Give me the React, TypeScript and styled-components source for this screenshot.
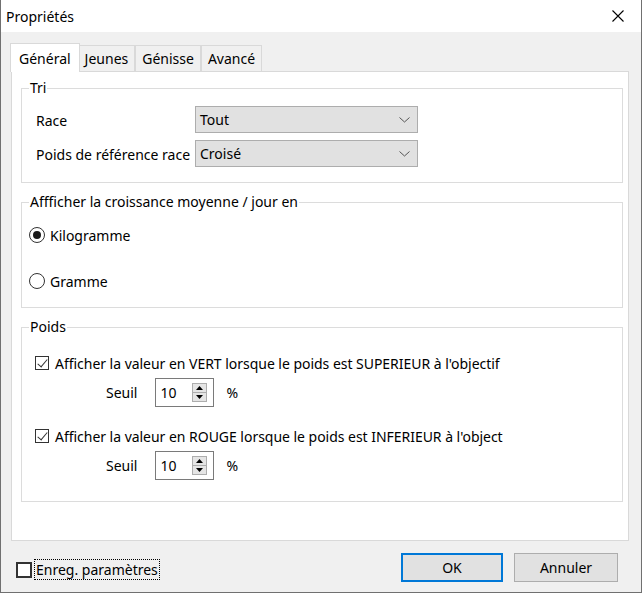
import styled, { createGlobalStyle } from "styled-components";

const GlobalStyle = createGlobalStyle`
    html, body {
        margin: 0;
        padding: 0;
        background: #ffffff;
    }
    body {
        font-family: "Segoe UI", "Noto Sans", sans-serif;
        font-size: 14px;
        color: #000;
    }
    * {
        box-sizing: border-box;
    }
`;

const tabs = ["Général", "Jeunes", "Génisse", "Avancé"];

export default function App() {
    return <Window>
        <GlobalStyle/>
        <TitleBar>
            <TitleText>Propriétés</TitleText>
            <CloseButton>
                <svg width="12" height="12" viewBox="0 0 12 12">
                    <path d="M0.5 0.5 L11.5 11.5 M11.5 0.5 L0.5 11.5" stroke="#000" strokeWidth="1.1" fill="none"/>
                </svg>
            </CloseButton>
        </TitleBar>

        <Body>
            <TabStrip>
                {tabs.map((t, i) => <Tab key={t} $active={i === 0}>{t}</Tab>)}
            </TabStrip>
            <Panel>
                <Group $height={103}>
                    <Legend>Tri</Legend>
                    <TriGrid>
                        <FieldLabel>Race</FieldLabel>
                        <Combo value="Tout"/>
                        <FieldLabel>Poids de référence race</FieldLabel>
                        <Combo value="Croisé"/>
                    </TriGrid>
                </Group>

                <Group $height={114} $gap={11}>
                    <Legend>Affficher la croissance moyenne / jour en</Legend>
                    <RadioList>
                        <RadioRow><Radio $checked/>Kilogramme</RadioRow>
                        <RadioRow><Radio/>Gramme</RadioRow>
                    </RadioList>
                </Group>

                <Group $height={183} $gap={11}>
                    <Legend>Poids</Legend>
                    <PoidsList>
                        <CheckRow>
                            <CheckBox $checked/>
                            <CheckText>Afficher la valeur en VERT lorsque le poids est SUPERIEUR à l'objectif</CheckText>
                        </CheckRow>
                        <SeuilRow>
                            <span>Seuil</span>
                            <Spin value="10"/>
                            <span>%</span>
                        </SeuilRow>
                        <CheckRow $top={19}>
                            <CheckBox $checked/>
                            <CheckText>Afficher la valeur en ROUGE lorsque le poids est INFERIEUR à l'objectif</CheckText>
                        </CheckRow>
                        <SeuilRow>
                            <span>Seuil</span>
                            <Spin value="10"/>
                            <span>%</span>
                        </SeuilRow>
                    </PoidsList>
                </Group>
            </Panel>
        </Body>

        <Footer>
            <SaveCheck>
                <FooterBox/>
                <FocusLabel>Enreg. paramètres</FocusLabel>
            </SaveCheck>
            <Buttons>
                <DialogButton $default>OK</DialogButton>
                <DialogButton>Annuler</DialogButton>
            </Buttons>
        </Footer>
    </Window>
}

const Combo = ({value}: { value: string }) => (
    <ComboBox>
        <span>{value}</span>
        <svg width="11" height="6" viewBox="0 0 11 6">
            <path d="M0.5 0.5 L5.5 5 L10.5 0.5" stroke="#555" strokeWidth="1" fill="none"/>
        </svg>
    </ComboBox>
);

const Spin = ({value}: { value: string }) => (
    <SpinBox>
        <span>{value}</span>
        <SpinButtons>
            <SpinButton>
                <svg width="7" height="4" viewBox="0 0 7 4"><path d="M0 4 L3.5 0 L7 4 Z" fill="#000"/></svg>
            </SpinButton>
            <SpinButton>
                <svg width="7" height="4" viewBox="0 0 7 4"><path d="M0 0 L3.5 4 L7 0 Z" fill="#000"/></svg>
            </SpinButton>
        </SpinButtons>
    </SpinBox>
);

const Window = styled.div`
    width: 642px;
    height: 593px;
    display: flex;
    flex-direction: column;
    background: #f0f0f0;
    border: 1px solid #707070;
    border-top: none;
`;

const TitleBar = styled.div`
    height: 32px;
    flex-shrink: 0;
    display: flex;
    align-items: center;
    background: #ffffff;
    padding-left: 5px;
`;

const TitleText = styled.span`
    font-size: 14px;
`;

const CloseButton = styled.div`
    margin-left: auto;
    width: 46px;
    height: 32px;
    display: flex;
    align-items: center;
    justify-content: center;
`;

const Body = styled.div`
    display: flex;
    flex-direction: column;
    padding: 11px 0 0 10px;
`;

const TabStrip = styled.div`
    height: 28px;
    display: flex;
    align-items: flex-end;
    padding-left: 1px;
`;

const Tab = styled.div<{ $active?: boolean }>`
    height: ${p => p.$active ? 29 : 26}px;
    margin: ${p => p.$active ? "0 -2px -1px -2px" : "0"};
    padding: ${p => p.$active ? "0 8px" : "0 6px"};
    position: relative;
    z-index: ${p => p.$active ? 2 : 1};
    display: flex;
    align-items: center;
    background: ${p => p.$active ? "#ffffff" : "#f0f0f0"};
    border: 1px solid #d9d9d9;
    border-bottom: none;
    white-space: nowrap;
`;

const Panel = styled.div`
    width: 618px;
    height: 470px;
    background: #ffffff;
    border: 1px solid #d9d9d9;
    padding: 8px 5px 0 9px;
    display: flex;
    flex-direction: column;
`;

const Group = styled.fieldset<{ $height: number; $gap?: number }>`
    height: ${p => p.$height}px;
    margin: ${p => p.$gap ?? 0}px 0 0 0;
    padding: 0;
    border: 1px solid #dcdcdc;
    min-width: 0;
`;

const Legend = styled.legend`
    margin-left: 7px;
    padding: 0 1px;
    line-height: 16px;
    height: 16px;
`;

const TriGrid = styled.div`
    display: grid;
    grid-template-columns: 159px 223px;
    grid-auto-rows: 27px;
    row-gap: 7px;
    align-items: center;
    padding: 10px 0 0 14px;
`;

const FieldLabel = styled.span`
    white-space: nowrap;
    padding-top: 2px;
`;

const ComboBox = styled.div`
    height: 27px;
    display: flex;
    align-items: center;
    justify-content: space-between;
    padding: 0 7px 0 4px;
    background: #e1e1e1;
    border: 1px solid #adadad;
`;

const RadioList = styled.div`
    display: flex;
    flex-direction: column;
    gap: 26px;
    padding: 15px 0 0 7px;
`;

const RadioRow = styled.div`
    height: 20px;
    display: flex;
    align-items: center;
    gap: 5px;
`;

const Radio = styled.span<{ $checked?: boolean }>`
    width: 16px;
    height: 16px;
    border-radius: 50%;
    border: 1px solid #333333;
    background: #ffffff;
    display: flex;
    align-items: center;
    justify-content: center;

    &::after {
        content: "";
        width: 8px;
        height: 8px;
        border-radius: 50%;
        background: #1a1a1a;
        display: ${p => p.$checked ? "block" : "none"};
    }
`;

const PoidsList = styled.div`
    display: flex;
    flex-direction: column;
    padding: 18px 0 0 13px;
`;

const CheckRow = styled.div<{ $top?: number }>`
    height: 20px;
    margin-top: ${p => p.$top ?? 0}px;
    display: flex;
    align-items: center;
    width: 468px;
    overflow: hidden;
`;

const CheckBox = styled.span<{ $checked?: boolean }>`
    flex-shrink: 0;
    width: 14px;
    height: 14px;
    margin-right: 6px;
    border: 1px solid #333333;
    background: #ffffff;
    position: relative;

    &::after {
        content: "";
        display: ${p => p.$checked ? "block" : "none"};
        position: absolute;
        left: 4px;
        top: 0px;
        width: 4px;
        height: 9px;
        border: solid #333333;
        border-width: 0 1px 1px 0;
        transform: rotate(40deg);
    }
`;

const CheckText = styled.span`
    white-space: nowrap;
    letter-spacing: -0.03px;
`;

const SeuilRow = styled.div`
    display: flex;
    align-items: center;
    margin-top: 5px;
    padding-left: 71px;

    & > span:first-child {
        margin-right: 18px;
    }
    & > span:last-child {
        margin-left: 12px;
    }
`;

const SpinBox = styled.div`
    width: 59px;
    height: 29px;
    border: 1px solid #7a7a7a;
    background: #ffffff;
    display: flex;
    align-items: center;
    justify-content: space-between;
    padding: 0 6px 0 4px;
`;

const SpinButtons = styled.div`
    display: flex;
    flex-direction: column;
`;

const SpinButton = styled.div`
    width: 15px;
    height: 10px;
    background: #e5e5e5;
    border: 1px solid #adadad;
    display: flex;
    align-items: center;
    justify-content: center;

    & + & {
        margin-top: -1px;
    }
`;

const Footer = styled.div`
    display: flex;
    align-items: flex-start;
    justify-content: space-between;
    padding: 12px 23px 0 15px;
`;

const SaveCheck = styled.div`
    display: flex;
    align-items: center;
    gap: 3px;
    margin-top: 7px;
`;

const FooterBox = styled.span`
    width: 16px;
    height: 16px;
    border: 2px solid #333333;
    background: #ffffff;
`;

const FocusLabel = styled.span`
    padding: 0 1px;
    outline: 1px dotted #000;
    line-height: 19px;
`;

const Buttons = styled.div`
    display: flex;
    gap: 11px;
`;

const DialogButton = styled.div<{ $default?: boolean }>`
    width: ${p => p.$default ? 102 : 104}px;
    height: 29px;
    display: flex;
    align-items: center;
    justify-content: center;
    background: #e1e1e1;
    border: ${p => p.$default ? "2px solid #0078d7" : "1px solid #adadad"};
`;
